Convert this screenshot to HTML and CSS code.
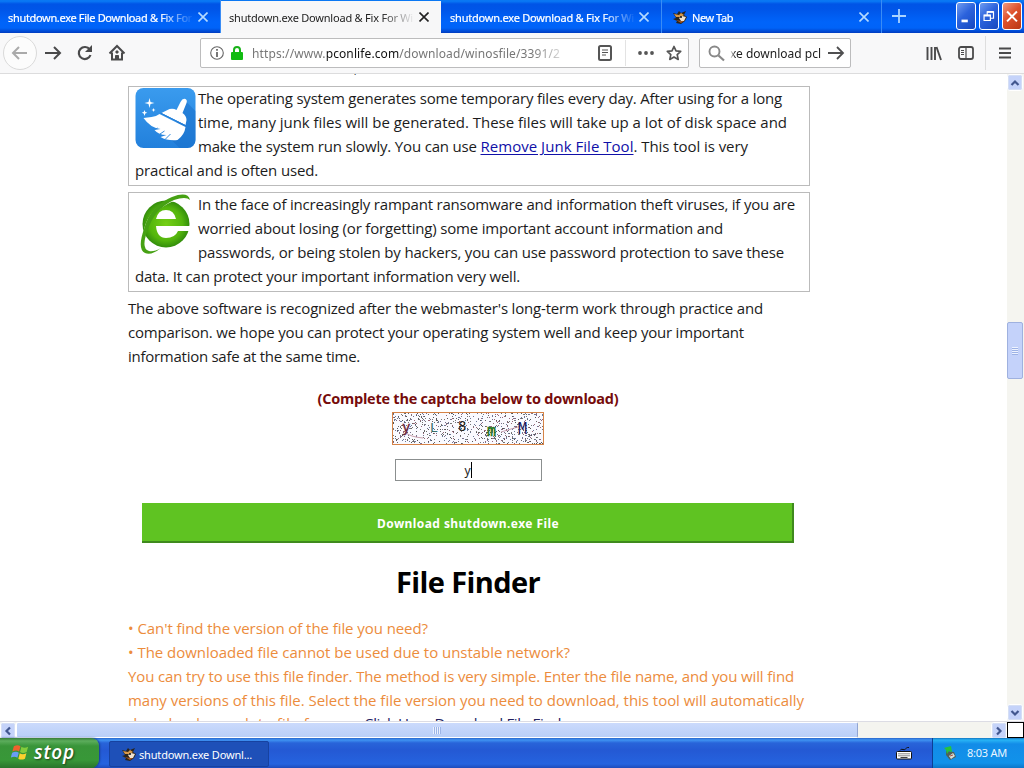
FILE: index.html
```html
<!DOCTYPE html>
<html lang="en">
<head>
<meta charset="utf-8">
<title>shutdown.exe Download &amp; Fix</title>
<link rel="stylesheet" href="styles.css">
</head>
<body>
<svg class="defs" width="0" height="0">
  <symbol id="fox" viewBox="0 0 16 16"><path d="M1 4l4 1 2-3 2 2 5-2-2 4 3 2-2 4-4 3-5-1 1-2-4-2 3-1z" fill="#2b241c"/><path d="M2 5l5 1 2-2 3 2-3 2-5 0z" fill="#d7994a"/><path d="M7 9l3-2 4 1-2 4-3 0z" fill="#efe2d0"/><circle cx="9" cy="8" r="1" fill="#111"/><path d="M4 11l5 1 3 0-3 2z" fill="#a6561f"/></symbol>
  <symbol id="x" viewBox="0 0 10 10"><path d="M.5 .5l9 9M9.500 .5l-9 9" fill="none" stroke="currentColor" stroke-width="1.600"/></symbol>
  <symbol id="chev" viewBox="0 0 10 10"><path d="M1.500 7L5 3.500L8.500 7" fill="none" stroke="#42578f" stroke-width="2.200"/></symbol>
</svg>
<div class="tabs">
  <div class="tab"><span class="tab-text"><span data-w="184">shutdown.exe File Download &amp; Fix For</span></span><svg class="close"><use href="#x"/></svg></div>
  <div class="tab active"><span class="tab-text"><span data-w="184">shutdown.exe Download &amp; Fix For Wi</span></span><svg class="close"><use href="#x"/></svg></div>
  <div class="tab"><span class="tab-text"><span data-w="184">shutdown.exe Download &amp; Fix For Wi</span></span><svg class="close"><use href="#x"/></svg></div>
  <div class="tab newtab"><svg class="fox"><use href="#fox"/></svg><span class="tab-text"><span data-w="41">New Tab</span></span><svg class="close"><use href="#x"/></svg></div>
  <svg class="plus" viewBox="0 0 14 14"><path d="M7 0v14M0 7h14" stroke="#a9d3ff" stroke-width="1.8"/></svg>
  <div class="winbtns">
    <div class="wb"><svg viewBox="0 0 20 27"><path d="M5 19h7" stroke="#fff" stroke-width="3"/></svg></div>
    <div class="wb"><svg viewBox="0 0 20 27"><path d="M8 13V9h7v7h-3M4.500 12.500h7v6h-7z" fill="none" stroke="#fff" stroke-width="1.300"/><path d="M8 9h7M4.500 13h7" stroke="#fff" stroke-width="2"/></svg></div>
    <div class="wb red"><svg viewBox="0 0 20 27"><path d="M4.500 8.500l11 11M15.500 8.500l-11 11" stroke="#fff" stroke-width="2.200"/></svg></div>
  </div>
</div>
<div class="toolbar">
  <div class="back"><svg viewBox="0 0 18 18"><path d="M16 9H2M8 3L2 9l6 6" fill="none" stroke="#aaa" stroke-width="2"/></svg></div>
  <svg class="nav fwd" viewBox="0 0 18 18"><path d="M1 9h15M10 3l6 6-6 6" fill="none" stroke="#4a4a4b" stroke-width="2"/></svg>
  <svg class="nav reload" viewBox="0 0 18 18"><path d="M13.700 5.500A6 6 0 1 0 14.500 11" fill="none" stroke="#4a4a4b" stroke-width="2.200"/><path d="M16 1v7H9z" fill="#4a4a4b"/></svg>
  <svg class="nav home" viewBox="0 0 18 18"><path d="M1.500 9.500L9 2l7.500 7.500M4 8.500V15.500h10V8.500" fill="none" stroke="#4a4a4b" stroke-width="2"/><path d="M7.500 15.500v-4h3v4M8 7h2v2H8z" fill="#4a4a4b" stroke="#4a4a4b"/></svg>
  <div class="url">
    <svg class="info" viewBox="0 0 14 14"><circle cx="7" cy="7" r="6.300" fill="none" stroke="#666" stroke-width="1.100"/><path d="M7 6v5M7 3v1.800" stroke="#555" stroke-width="1.600"/></svg>
    <svg class="lock" viewBox="0 0 12 14"><path d="M3 7V4a3 3 0 0 1 6 0v3" fill="none" stroke="#18b218" stroke-width="2"/><rect y="6" width="12" height="8" rx="1" fill="#12bc12"/></svg>
    <span class="address"><span data-w="308">https://www.<b>pconlife.com</b>/download/winosfile/3391/2</span></span>
    <svg class="reader" viewBox="0 0 14 16"><rect x="1" y="1" width="12" height="14" rx="1.500" fill="none" stroke="#555" stroke-width="2"/><path d="M4 5h6M4 7.500h6M4 10h4" stroke="#555"/></svg>
    <i class="sep"></i>
    <svg class="dots" viewBox="0 0 16 4"><g fill="#555"><circle cx="2" cy="2" r="1.900"/><circle cx="8" cy="2" r="1.900"/><circle cx="14" cy="2" r="1.900"/></g></svg>
    <svg class="star" viewBox="0 0 16 16"><path d="M8 1.500l2 4.400 4.700.5-3.500 3.200 1 4.800L8 12l-4.200 2.400 1-4.800L1.300 6.400 6 5.900z" fill="none" stroke="#555" stroke-width="1.700" stroke-linejoin="round"/></svg>
  </div>
  <div class="search">
    <svg class="mag" viewBox="0 0 17 17"><circle cx="6.500" cy="6.500" r="5" fill="none" stroke="#888" stroke-width="1.900"/><path d="M10.500 10.500l5.500 5" stroke="#888" stroke-width="2.200"/></svg>
    <span class="query"><span data-w="91">xe download pcl</span></span>
    <svg class="go" viewBox="0 0 18 18"><path d="M1 9h15M10 3l6 6-6 6" fill="none" stroke="#4f4f50" stroke-width="1.800"/></svg>
  </div>
  <svg class="lib" viewBox="0 0 16 15"><path d="M1.500 1v13M5.500 1v13M9 1v13M10.500 1l4.500 13" stroke="#4a4a4b" stroke-width="1.900"/></svg>
  <svg class="side" viewBox="0 0 16 14"><rect x="1" y="1" width="14" height="12" rx="2" fill="none" stroke="#4a4a4b" stroke-width="1.800"/><path d="M8 1v12M3 4.500h3M3 6.500h3M3 8.500h3" stroke="#4a4a4b" stroke-width="1.200"/></svg>
  <i class="tsep"></i>
  <svg class="menu" viewBox="0 0 12 12"><path d="M0 1.500h12M0 6h12M0 10.500h12" stroke="#4a4a4b" stroke-width="2"/></svg>
</div>
<div class="main">
  <div class="page">
    <div class="prev">,</div>
    <div class="card">
      <svg class="pic" viewBox="0 0 60 60"><defs><linearGradient id="bl" x2="0" y2="1"><stop stop-color="#3a9bee"/><stop offset="1" stop-color="#2280dc"/></linearGradient></defs><rect width="60" height="60" rx="8" fill="url(#bl)"/><path d="M50 13L60 23V52a8 8 0 0 1-8 8H44L34 50z" fill="#176bc5" opacity=".45"/><path d="M26 25l8-4q4-1 7 1l4-8q2-4 5-3 2 1 1 4l-4 10q4 3 4 7l-1 5-24-12z" fill="#fff"/><path d="M24 26l26 13q-1 8-8 13-10 1-17-3l6-2q-8 0-12-5l6-1q-10-1-17-11l8-1q4 0 8-3z" fill="#fff"/><path d="M25 25l26 13" stroke="#267fd7" stroke-width="1"/><path d="M23 47l6-4M30 51l5-5M18 42l4-2" stroke="#348bdc"/><path d="M14 10l1 4 4 1-4 1-1 4-1-4-4-1 4-1zM9 22l.8 2 2 .8-2 .8L9 28l-.8-2.400-2-.8 2-.8zM18 20l.6 1.500 1.500.5-1.500.6-.6 1.500-.6-1.500-1.500-.6 1.500-.5z" fill="#fff"/></svg>
      <div class="ln"><span data-w="584">The operating system generates some temporary files every day. After using for a long</span></div>
      <div class="ln"><span data-w="589">time, many junk files will be generated. These files will take up a lot of disk space and</span></div>
      <div class="ln"><span data-w="282.500">make the system run slowly. You can use </span><a data-w="153">Remove Junk File Tool</a><span data-w="114.500">. This tool is very</span></div>
      <div class="ln"><span data-w="183">practical and is often used.</span></div>
    </div>
    <div class="card second">
      <svg class="pic" viewBox="0 0 60 60"><defs><radialGradient id="gr"><stop stop-color="#75cf16"/><stop offset=".7" stop-color="#54b50d"/><stop offset="1" stop-color="#328d0b"/></radialGradient></defs><circle cx="31" cy="30" r="23.500" fill="url(#gr)"/><path d="M21 25q2-9 10-9t10 9zM21 32H56V37H43q-3 7-12 7-9 0-10-12z" fill="#fff"/><path d="M10 37Q16 12 43 4" stroke="#fff" stroke-width="3" fill="none"/><path d="M9 35Q15 12 37 3 53-3 55 6 51 2 39 6 19 15 12 38 6 55 14 57q5 1 12-3-10 8-16 5-8-4-1-24z" fill="#46a113"/></svg>
      <div class="ln"><span data-w="597">In the face of increasingly rampant ransomware and information theft viruses, if you are</span></div>
      <div class="ln"><span data-w="525">worried about losing (or forgetting) some important account information and</span></div>
      <div class="ln"><span data-w="586">passwords, or being stolen by hackers, you can use password protection to save these</span></div>
      <div class="ln"><span data-w="385">data. It can protect your important information very well.</span></div>
    </div>
    <div class="para">
      <div class="ln"><span data-w="635">The above software is recognized after the webmaster's long-term work through practice and</span></div>
      <div class="ln"><span data-w="616">comparison. we hope you can protect your operating system well and keep your important</span></div>
      <div class="ln"><span data-w="232">information safe at the same time.</span></div>
    </div>
    <div class="form">
      <div class="caption"><span data-w="301">(Complete the captcha below to download)</span></div>
      <svg class="captcha" viewBox="0 0 150 31"><g id="noise" shape-rendering="crispEdges"></g><path d="M12 19q5 5 18 6M108 19l20-6" stroke="#b89" fill="none" stroke-width=".8"/><g font-family="DejaVu Sans Mono" font-size="14"><text x="9" y="19" fill="#6c263c" stroke="#6c263c" stroke-width=".4">y</text><text x="37" y="19" font-size="13" fill="#346b68">L</text><text x="65" y="18" font-size="14" fill="#222">8</text><text x="94" y="23" font-size="15" fill="#24751c" stroke="#24751c" stroke-width=".5">m</text><text x="125" y="21" font-size="15" fill="#17155d">M</text></g></svg>
      <div class="input">y<i></i></div>
      <div class="button"><span data-w="182">Download shutdown.exe File</span></div>
      <h1><span data-w="144">File Finder</span></h1>
    </div>
    <div class="orange">
      <div class="ln"><span data-w="300">• Can't find the version of the file you need?</span></div>
      <div class="ln"><span data-w="442">• The downloaded file cannot be used due to unstable network?</span></div>
      <div class="ln"><span data-w="666">You can try to use this file finder. The method is very simple. Enter the file name, and you will find</span></div>
      <div class="ln"><span data-w="676">many versions of this file. Select the file version you need to download, this tool will automatically</span></div>
      <div class="ln last"><span data-w="232">download complete file for you.</span><span class="dark" data-w="211">Click Here Download File Finder</span></div>
    </div>
  </div>
  <div class="vbar"><div class="sb"><svg><use href="#chev"/></svg></div><div class="vthumb"><i></i></div><div class="sb down"><svg><use href="#chev"/></svg></div></div>
</div>
<div class="hbar"><div class="sb left"><svg><use href="#chev"/></svg></div><div class="hthumb"><i></i></div><div class="sb right"><svg><use href="#chev"/></svg></div><div class="corner"></div></div>
<div class="taskbar">
  <div class="start"><svg viewBox="0 0 20 18"><path d="M3 3q4-2 7 0L8.500 8.500q-3-2-7 0z" fill="#f0612d"/><path d="M11 3.500q3 2 7 0L16.500 9q-4 2-7 0z" fill="#83cc3c"/><path d="M1.200 9.700q4-2 7 0L6.700 15q-3-2-7 0z" fill="#6a9df5"/><path d="M9.200 10.300q3 2 7 0L14.700 16q-4 2-7 0z" fill="#fbd12e"/></svg><span data-w="41">stop</span></div>
  <div class="task"><svg class="fox"><use href="#fox"/></svg><span data-w="113">shutdown.exe Downl...</span></div>
  <svg class="kbd" viewBox="0 0 16 12"><path d="M4 3q1-2 3-1t3-1 3-1" stroke="#111" fill="none" stroke-width="1"/><rect x=".5" y="4" width="15" height="7.500" rx="1" fill="#fff" stroke="#111"/><path d="M2.500 6.300h11M2.500 8.300h11" stroke="#111" stroke-dasharray="1 1"/><path d="M4.500 10h7" stroke="#111" stroke-width=".8"/></svg>
  <div class="tray"><svg viewBox="0 0 14 14"><path d="M3 5l8 1 2 5-6 3-4-5z" fill="#50605a"/><path d="M6 10l4-3 2 3-4 3z" fill="#d7ded8"/><path d="M1 2l7-2 1 6-3-1-2 3-1-4z" fill="#26c33b"/><path d="M7 10l3-1" stroke="#a54" /></svg><span data-w="40">8:03 AM</span></div>
</div>
<script src="page.js"></script>
</body>
</html>
```
FILE: styles.css
```css
* { box-sizing: border-box; }
body { margin: 0; width: 1024px; height: 768px; overflow: hidden; display: flex; flex-direction: column; background: #fff; font-family: "Open Sans", "Noto Sans", sans-serif; font-size: 15px; color: #1c1c1c; }
svg { display: block; flex: none; }
.defs { position: absolute; }
[data-w] { display: inline-block; white-space: pre; }
.tabs { height: 33px; flex: none; display: flex; background: linear-gradient(#0a74f0 0, #0a7bf6 1px, #0054e6 4px, #0055e8 9px, #0064fa 22px, #0063f8 28px, #003cc0 33px); color: #fff; font-family: "Noto Sans", sans-serif; font-size: 11px; }
.tab { width: 221px; padding: 1px 12px 0 8px; display: flex; align-items: center; border-right: 1px solid #3a8cf5; color: #b5dbff; }
.tab + .tab { width: 221px; padding-left: 9px; }
.tab + .tab.newtab { width: 220px; padding-left: 10px; }
.tab + .tab.active { width: 220px; padding-left: 8px; background: #f7f7f8; color: #222; border: 0; margin-top: 1px; padding-top: 0; }
.tab-text { width: 184px; overflow: hidden; white-space: nowrap; color: #fff; -webkit-mask-image: linear-gradient(90deg, #000 152px, transparent 186px); mask-image: linear-gradient(90deg, #000 152px, transparent 186px); -webkit-text-stroke: .2px #fff; }
.active .tab-text { color: #222; -webkit-text-stroke: 0; }
.newtab .tab-text { width: 160px; margin-left: 4px; }
.close { width: 10px; height: 10px; margin-left: auto; }
.fox { width: 16px; height: 16px; }
.plus { width: 14px; height: 14px; margin: 9px 0 0 10px; }
.winbtns { display: flex; gap: 3px; margin: 2px 2px 0 auto; }
.wb { width: 20px; height: 28px; border: 1px solid #fff; border-radius: 3px; background: linear-gradient(135deg, #6f9cf0, #2b62dc 45%, #1748bf); }
.wb svg { width: 18px; height: 26px; }
.wb.red { background: linear-gradient(135deg, #f09a80, #de512d 45%, #b93713); }
.toolbar { height: 41px; flex: none; display: flex; align-items: center; background: #f8f8f9; border-bottom: 1px solid #dcdcdd; font-family: "Noto Sans", sans-serif; font-size: 12px; }
.back { width: 34px; height: 34px; margin-left: 3px; border: 1px solid #dadada; border-radius: 50%; background: #fcfcfc; display: grid; place-items: center; }
.back svg, .nav { width: 18px; height: 18px; }
.fwd { margin-left: 7px; }
.reload { margin-left: 14px; }
.home { margin-left: 14px; }
.url, .search { height: 30px; border: 1px solid #bcbcbd; border-radius: 2px; background: #fff; display: flex; align-items: center; }
.url { width: 489px; margin-left: 74px; padding-left: 9px; }
.info { width: 14px; height: 14px; }
.lock { width: 12px; height: 14px; margin-left: 7px; }
.address { width: 308px; margin-left: 9px; color: #777; white-space: nowrap; -webkit-mask-image: linear-gradient(90deg, #000 280px, rgba(0, 0, 0, .3)); mask-image: linear-gradient(90deg, #000 280px, rgba(0, 0, 0, .3)); }
.address b { font-weight: 400; color: #111; }
.reader { width: 14px; height: 16px; margin-left: 38px; }
.sep { width: 1px; height: 26px; background: #e3e3e3; margin-left: 13px; }
.dots { width: 16px; height: 4px; margin-left: 12px; }
.star { width: 16px; height: 16px; margin-left: 12px; }
.search { width: 152px; margin-left: 10px; padding-left: 8px; }
.mag { width: 17px; height: 17px; }
.query { width: 91px; margin-left: 5px; color: #222; -webkit-mask-image: linear-gradient(90deg, transparent, #000 5px); mask-image: linear-gradient(90deg, transparent, #000 5px); }
.go { width: 18px; height: 18px; margin-left: 6px; }
.lib { width: 16px; height: 15px; margin-left: 75px; }
.side { width: 16px; height: 14px; margin-left: 16px; }
.tsep { width: 1px; height: 34px; margin-left: 11px; background: #dedede; }
.menu { width: 12px; height: 12px; margin-left: 13px; }
.main { height: 648px; flex: none; display: flex; }
.page { width: 1007px; height: 647px; overflow: hidden; padding: 0 197px 0 128px; }
.prev { height: 12px; padding-left: 226px; line-height: 12px; margin-top: -12px; margin-bottom: 12px; font-size: 13px; }
.card { height: 100px; border: 1px solid #bbb; padding: 0 6px; }
.second { margin-top: 6px; }
.pic { float: left; width: 61px; height: 60px; margin: 1px 2px 0 0; }
.second .pic { width: 60px; margin-right: 3px; }
.ln { height: 24px; line-height: 22px; white-space: nowrap; }
.card a { color: #1010a8; text-decoration: underline; text-underline-offset: 2px; }
.para { margin-top: 5px; }
.form { width: 680px; display: flex; flex-direction: column; align-items: center; }
.caption { margin-top: 18px; height: 24px; line-height: 24px; font-weight: 700; font-size: 14.500px; color: #760b0b; }
.captcha { width: 152px; height: 33px; margin-top: 1px; border: 1px solid #d58347; background: #fafaff; }
.input { width: 147px; height: 22px; margin-top: 14px; border: 1px solid #8b8f8f; display: flex; justify-content: center; align-items: center; font: 12px "Noto Sans", sans-serif; }
.input i { width: 1px; height: 16px; background: #000; }
.button { width: 652px; height: 40px; margin-top: 22px; background: #5fc322; border-right: 2px solid #3f8a1d; border-bottom: 2px solid #3f8a1d; color: #fff; font: bold 12px/41px "Noto Sans", sans-serif; text-align: center; padding-left: 2px; }
h1 { margin: 17px 0 0; height: 44px; line-height: 43px; font-size: 29px; font-weight: 700; color: #000; }
.orange { margin-top: 13px; color: #ec8c3c; }
.ln.last { line-height: 20px; }
.dark { margin-left: 4px; color: #222262; }
.vbar { width: 17px; background: #f5f5f0; display: flex; flex-direction: column; }
.sb { width: 16px; height: 17px; flex: none; border: 1px solid #fff; outline: 1px solid #d5dff5; outline-offset: -2px; border-radius: 3px; background: #c5d3fa; display: grid; place-items: center; }
.sb svg { width: 10px; height: 10px; }
.down svg { transform: rotate(180deg); }
.left svg { transform: rotate(-90deg); }
.right svg { transform: rotate(90deg); }
.vthumb { width: 16px; height: 57px; margin-top: 231px; border: 1px solid #9fb1df; border-radius: 2px; background: #c4d2fa; display: grid; place-items: center; }
.vthumb i { width: 6px; height: 8px; background: repeating-linear-gradient(#eef3ff 0 1px, #9db2e5 1px 2px); }
.down { margin-top: auto; margin-bottom: 1px; }
.hbar { height: 17px; margin-top: -1px; flex: none; display: flex; background: #f4f4ef; border-top: 1px solid #dcdce4; }
.hthumb { width: 842px; height: 16px; border: 1px solid #fff; border-right-color: #91a4d2; border-radius: 2px; background: linear-gradient(#cbdafc, #b9cff8); display: grid; place-items: center; }
.hthumb i { width: 8px; height: 7px; background: repeating-linear-gradient(90deg, #eaf1ff 0 1px, #9db5e6 1px 2px); }
.right { margin-left: auto; }
.corner { width: 17px; height: 16px; border: 1px solid #000; background: #fff; }
.taskbar { height: 31px; flex: none; display: flex; background: linear-gradient(#2965ca 0, #3f93f2 2px, #2864d9 5px, #2459d4 12px, #2563df 26px, #1c45b2 31px); font-family: "Noto Sans", sans-serif; color: #fff; align-items: stretch; }
.start { width: 99px; padding: 0 0 3px 11px; display: flex; align-items: center; background: linear-gradient(#377e37 0, #5cad5c 3px, #399539 8px, #389838 22px, #28702a 31px); border-radius: 0 8px 10px 0; box-shadow: 1px 0 2px #173d8e; font: italic 600 19px "Open Sans", sans-serif; text-shadow: 1px 1px 2px #1b3d1b; }
.start svg { width: 19px; height: 18px; margin-right: 4px; }
.task { width: 160px; height: 26px; margin: 3px 0 0 10px; padding-left: 11px; display: flex; align-items: center; gap: 2px; background: #1e50b8; border: 1px solid #1742a0; border-radius: 2px; font-size: 11px; }
.kbd { width: 16px; height: 13px; margin: 9px 20px 0 auto; }
.tray { width: 92px; padding: 0 0 2px 10px; display: flex; align-items: center; gap: 10px; font-size: 11px; color: #e9f6ff; border-left: 1px solid #0c3f95; background: linear-gradient(#1375c0 0, #28b4f5 2px, #128ce8 6px, #1192ea 25px, #0b70c2 31px); }
.tray svg { width: 14px; height: 14px; }
```
FILE: page.js
```js
document.querySelectorAll('[data-w]').forEach(function (el) {
  var natural = el.getBoundingClientRect().width;
  el.style.letterSpacing = (el.dataset.w - natural) / el.textContent.length + 'px';
});

// Speckle the captcha with a seeded generator so it is stable between loads.
var seed = 7;
function rnd() { seed = (seed * 16807) % 2147483647; return seed / 2147483647; }
var colours = ['#77708c', '#555', '#967', '#687999', '#777', '#666'];
var d = colours.map(function () { return ''; });
for (var i = 0; i < 800; i++) {
  d[i % 6] += 'M' + Math.floor(rnd() * 150) + ' ' + Math.floor(rnd() * 31) + 'h1v1h-1z';
}
document.getElementById('noise').innerHTML = colours.map(function (c, n) {
  return '<path fill="' + c + '" d="' + d[n] + '"/>';
}).join('');
```
